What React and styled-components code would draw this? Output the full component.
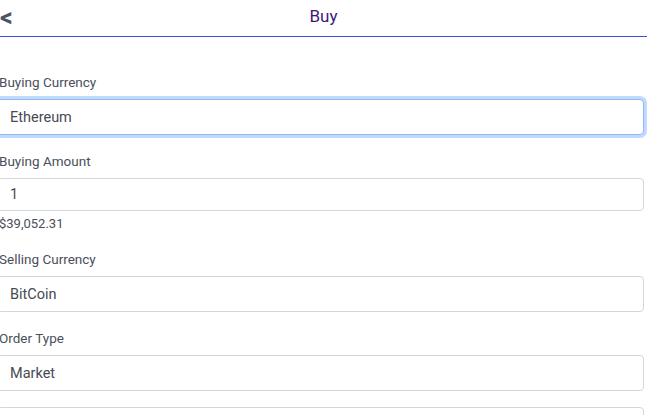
import React from "react";
import styled, { createGlobalStyle, css } from "styled-components";

const GlobalStyle = createGlobalStyle`
  html, body {
    margin: 0;
    padding: 0;
    background: #ffffff;
    font-family: Roboto, "Liberation Sans", sans-serif;
    overflow: hidden;
  }
`;

const fields = [
  { label: "Buying Currency", value: "Ethereum", focused: true },
  { label: "Buying Amount", value: "1", note: "$39,052.31", short: true },
  { label: "Selling Currency", value: "BitCoin" },
  { label: "Order Type", value: "Market" },
  { value: "" },
];

export default function App() {
  return (
    <>
      <GlobalStyle />
      <Page>
        <Header>
          <BackButton>&lt;</BackButton>
          <Title>Buy</Title>
        </Header>
        <Form>
          {fields.map((f, i) => (
            <Field key={i}>
              {f.label && <Label>{f.label}</Label>}
              <Input focused={f.focused} short={f.short}>
                {f.value}
              </Input>
              {f.note && <Note>{f.note}</Note>}
            </Field>
          ))}
        </Form>
      </Page>
    </>
  );
}

const Page = styled.div`
  width: 647px;
  height: 415px;
  overflow: hidden;
`;

const Header = styled.div`
  position: relative;
  height: 36px;
  border-bottom: 1px solid #3d4ee6;
  display: flex;
  align-items: center;
  justify-content: center;
`;

const BackButton = styled.span`
  position: absolute;
  left: 0;
  top: 5px;
  font-size: 25px;
  font-weight: 700;
  color: #4b5465;
  line-height: 26px;
`;

const Title = styled.h1`
  margin: 0;
  font-size: 17px;
  font-weight: 400;
  color: #3b1a76;
  margin-top: -5px;
`;

const Form = styled.div`
  display: flex;
  flex-direction: column;
  gap: 16px;
  padding-top: 35px;
  margin-left: -3px;
  width: 647px;
`;

const Field = styled.div`
  display: flex;
  flex-direction: column;
`;

const Label = styled.label`
  font-size: 13.5px;
  line-height: 20px;
  color: #4a4f5a;
  padding-left: 2px;
  margin-bottom: 7px;
`;

const Input = styled.div`
  box-sizing: border-box;
  height: ${(p) => (p.short ? "33px" : "36px")};
  padding: 0 12px;
  display: flex;
  align-items: center;
  font-size: 14.5px;
  color: #464b53;
  border: 1px solid #d3d6db;
  border-radius: 4px;
  background: #fff;
  ${(p) =>
    p.focused &&
    css`
      border-color: #8fb6f6;
      box-shadow: 0 0 0 3px #c2dafc;
    `}
`;

const Note = styled.div`
  margin-top: 3px;
  margin-bottom: -1px;
  padding-left: 2px;
  font-size: 13px;
  line-height: 20px;
  color: #4a4f5a;
`;
